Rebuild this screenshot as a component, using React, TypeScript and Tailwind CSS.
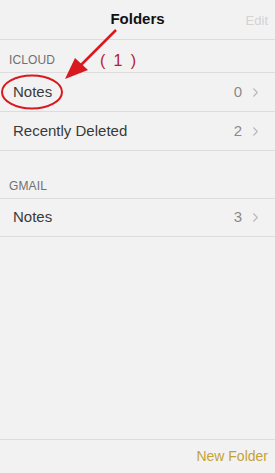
import { ChevronRight } from 'lucide-react'

const font = { fontFamily: '"Liberation Sans", Arial, sans-serif' }

function Row({ label, count, h = 'h-[39px]' }: { label: string; count: number; h?: string }) {
  return (
    <div className={`${h} flex items-center pl-[13px] pr-[12px] border-b border-[#dcdcdc]`}>
      <span className="flex-1 text-[15px] text-[#3a3a3a]">{label}</span>
      <span className="text-[15px] text-[#8a8a8a] mr-[6px]">{count}</span>
      <ChevronRight size={15} strokeWidth={1.75} className="text-[#b8b8bc]" />
    </div>
  )
}

function Section({ title }: { title: string }) {
  return (
    <div className="h-[33px] flex items-end pb-[3px] pl-[9px] border-b border-[#dcdcdc]">
      <span className="text-[12px] text-[#707070] tracking-[0.01em]">{title}</span>
    </div>
  )
}

export default function App() {
  return (
    <div className="relative w-[275px] h-[473px] bg-[#f2f2f2] flex flex-col" style={font}>
      {/* Nav bar */}
      <div className="h-[40px] flex items-center justify-center relative border-b border-[#dcdcdc]">
        <span className="text-[15px] font-bold text-[#111]">Folders</span>
        <span className="absolute right-[7px] top-[11px] text-[13px] text-[#d3d3d3]">Edit</span>
      </div>

      <Section title="ICLOUD" />
      <Row label="Notes" count={0} />
      <Row label="Recently Deleted" count={2} />
      <div className="h-[15px]" />
      <Section title="GMAIL" />
      <Row label="Notes" count={3} h="h-[38px]" />

      <div className="flex-1" />

      {/* Toolbar */}
      <div className="h-[34px] border-t border-[#dcdcdc] flex items-center justify-end pr-[7px]">
        <span className="text-[14px] text-[#c4a236] font-medium">New Folder</span>
      </div>

      {/* Annotation overlay */}
      <svg className="absolute inset-0 pointer-events-none" width="275" height="473">
        <ellipse cx="32" cy="92" rx="30" ry="16.5" fill="none" stroke="#d8191f" strokeWidth="2" />
        <line x1="116" y1="30" x2="80" y2="66" stroke="#d8191f" strokeWidth="2.5" />
        <polygon points="65,79 75,58 88,70" fill="#d8191f" />
      </svg>
      <span className="absolute left-[100px] top-[49px] text-[16px] text-[#b8202a] tracking-[0.12em]">( 1 )</span>
    </div>
  )
}
